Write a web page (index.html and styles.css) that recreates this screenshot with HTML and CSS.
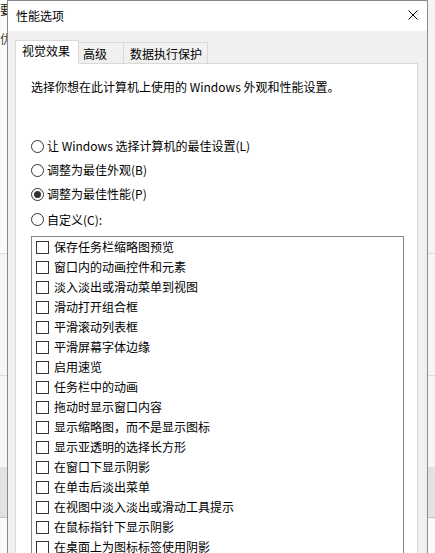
FILE: index.html
```html
<!DOCTYPE html>
<html lang="zh-CN">
<head>
<meta charset="utf-8">
<title>性能选项</title>
<link rel="stylesheet" href="styles.css">
</head>
<body>
<div class="screen">
  <div class="bg-side bg-left">
    <div class="bg-top">
      <div class="bg-char bg-char-1">要</div>
      <div class="bg-char bg-char-2">优</div>
    </div>
    <div class="bg-seg bg-seg-a"></div>
    <div class="bg-seg bg-seg-b"></div>
    <div class="bg-band"></div>
    <div class="bg-rest"></div>
  </div>

  <div class="dialog">
    <div class="titlebar">
      <span class="title">性能选项</span>
      <svg class="close" width="10" height="10" viewBox="0 0 10 10" aria-hidden="true">
        <path d="M0.5 0.5 L9.5 9.5 M9.5 0.5 L0.5 9.5" stroke="#000" stroke-width="1" fill="none"/>
      </svg>
    </div>
    <div class="body">
      <div class="tabs">
        <div class="tab tab-active tab-1">视觉效果</div>
        <div class="tab tab-2">高级</div>
        <div class="tab tab-3">数据执行保护</div>
      </div>
      <div class="panel">
        <p class="intro">选择你想在此计算机上使用的 Windows 外观和性能设置。</p>
        <div class="radios">
          <div class="radio-row"><span class="radio"></span><span class="label">让 Windows 选择计算机的最佳设置(L)</span></div>
          <div class="radio-row"><span class="radio"></span><span class="label">调整为最佳外观(B)</span></div>
          <div class="radio-row"><span class="radio radio-on"></span><span class="label">调整为最佳性能(P)</span></div>
          <div class="radio-row"><span class="radio"></span><span class="label">自定义(C):</span></div>
        </div>
        <div class="listbox">
          <div class="item"><span class="check"></span><span class="label">保存任务栏缩略图预览</span></div>
          <div class="item"><span class="check"></span><span class="label">窗口内的动画控件和元素</span></div>
          <div class="item"><span class="check"></span><span class="label">淡入淡出或滑动菜单到视图</span></div>
          <div class="item"><span class="check"></span><span class="label">滑动打开组合框</span></div>
          <div class="item"><span class="check"></span><span class="label">平滑滚动列表框</span></div>
          <div class="item"><span class="check"></span><span class="label">平滑屏幕字体边缘</span></div>
          <div class="item"><span class="check"></span><span class="label">启用速览</span></div>
          <div class="item"><span class="check"></span><span class="label">任务栏中的动画</span></div>
          <div class="item"><span class="check"></span><span class="label">拖动时显示窗口内容</span></div>
          <div class="item"><span class="check"></span><span class="label">显示缩略图，而不是显示图标</span></div>
          <div class="item"><span class="check"></span><span class="label">显示亚透明的选择长方形</span></div>
          <div class="item"><span class="check"></span><span class="label">在窗口下显示阴影</span></div>
          <div class="item"><span class="check"></span><span class="label">在单击后淡出菜单</span></div>
          <div class="item"><span class="check"></span><span class="label">在视图中淡入淡出或滑动工具提示</span></div>
          <div class="item"><span class="check"></span><span class="label">在鼠标指针下显示阴影</span></div>
          <div class="item"><span class="check"></span><span class="label">在桌面上为图标标签使用阴影</span></div>
          <div class="item"><span class="check"></span><span class="label">在最大化和最小化时显示窗口动画</span></div>
        </div>
      </div>
    </div>
  </div>

  <div class="bg-side bg-right">
    <div class="bg-top"></div>
    <div class="bg-seg bg-seg-a"></div>
    <div class="bg-seg bg-seg-b"></div>
    <div class="bg-band"></div>
    <div class="bg-rest"></div>
  </div>
</div>
</body>
</html>
```

FILE: styles.css
```css
html, body {
  margin: 0;
  padding: 0;
}

body {
  width: 435px;
  height: 553px;
  overflow: hidden;
  background: #f7f7f7;
  font-family: "Noto Sans CJK SC", "Noto Sans", sans-serif;
  font-size: 12px;
  color: #000;
}

.screen {
  display: flex;
  width: 435px;
  height: 553px;
  overflow: hidden;
}

/* background window fragments on both sides */
.bg-side {
  flex: none;
  width: 7px;
  display: flex;
  flex-direction: column;
  overflow: hidden;
}

.bg-left {
  background: #f9f9f9;
}

.bg-right {
  background: #f4f4f4;
}

.bg-top {
  height: 253px;
  flex: none;
}

.bg-left .bg-top {
  background: #fbfbfb;
}

.bg-char {
  line-height: 16px;
  white-space: nowrap;
  font-size: 12px;
}

.bg-char-1 {
  padding-top: 2px;
  color: #111;
}

.bg-char-2 {
  margin-top: 13px;
  color: #444;
}

.bg-seg {
  flex: none;
  border-top: 1px solid #dcdcdc;
}

.bg-seg-a {
  height: 121px;
  background: #f6f6f6;
}

.bg-seg-b {
  height: 91px;
  background: #f6f6f6;
}

.bg-band {
  flex: none;
  height: 50px;
  background: #e2e2e2;
  border-bottom: 1px solid #c4c4c4;
}

.bg-rest {
  flex: 1;
  background: #fafafa;
}

/* dialog */
.dialog {
  flex: none;
  width: 421px;
  height: 560px;
  box-sizing: border-box;
  border: 1px solid #8a8a8a;
  border-bottom: none;
  display: flex;
  flex-direction: column;
  background: #f0f0f0;
}

.titlebar {
  flex: none;
  height: 30px;
  background: #fff;
  display: flex;
  align-items: flex-start;
}

.title {
  margin-left: 8px;
  margin-top: 7px;
  line-height: 16px;
}

.close {
  margin-left: auto;
  margin-right: 9px;
  margin-top: 9px;
  display: block;
}

.body {
  flex: 1;
  background: #f0f0f0;
  padding: 9px 9px 0 7px;
  display: flex;
  flex-direction: column;
  min-height: 0;
}

.tabs {
  flex: none;
  height: 24px;
  display: flex;
  align-items: flex-end;
  margin-bottom: -1px;
  position: relative;
  z-index: 1;
}

.tab {
  box-sizing: border-box;
  line-height: 16px;
  white-space: nowrap;
  border-top: 1px solid #d9d9d9;
  border-right: 1px solid #d9d9d9;
  background: #f0f0f0;
}

.tab-active {
  height: 24px;
  background: #fff;
  border-left: 1px solid #d9d9d9;
  padding-top: 2px;
}

.tab-1 {
  width: 64px;
  padding-left: 6px;
}

.tab-2 {
  width: 45px;
  height: 21px;
  margin-bottom: 1px;
  padding-top: 3px;
  padding-left: 4px;
}

.tab-3 {
  width: 84px;
  height: 21px;
  margin-bottom: 1px;
  padding-top: 3px;
  padding-left: 6px;
}

.panel {
  flex: 1;
  width: 403px;
  box-sizing: border-box;
  background: #fff;
  border: 1px solid #d9d9d9;
  border-bottom: none;
  padding: 15px 0 0 15px;
  min-height: 0;
  overflow: hidden;
}

.intro {
  margin: 0;
  line-height: 16px;
  white-space: nowrap;
}

.radios {
  margin-top: 39px;
  display: flex;
  flex-direction: column;
}

.radio-row {
  height: 24px;
  display: flex;
  align-items: center;
}

.radio-row:last-child {
  height: 27px;
}

.radio {
  flex: none;
  width: 13px;
  height: 13px;
  box-sizing: border-box;
  border: 1px solid #333;
  border-radius: 50%;
  background: #fff;
  display: flex;
  align-items: center;
  justify-content: center;
}

.radio-on::after {
  content: "";
  width: 7px;
  height: 7px;
  border-radius: 50%;
  background: #333;
}

.radio-row .label {
  margin-left: 3px;
  line-height: 16px;
  white-space: nowrap;
}

.listbox {
  margin-top: 3px;
  width: 373px;
  box-sizing: border-box;
  border: 1px solid #828790;
  border-bottom: none;
  background: #fff;
  display: flex;
  flex-direction: column;
}

.item {
  flex: none;
  height: 20px;
  display: flex;
  align-items: center;
  padding-left: 4px;
}

.check {
  flex: none;
  width: 13px;
  height: 13px;
  box-sizing: border-box;
  border: 1px solid #333;
  background: #fff;
}

.item .label {
  margin-left: 5px;
  line-height: 16px;
  white-space: nowrap;
}
```
